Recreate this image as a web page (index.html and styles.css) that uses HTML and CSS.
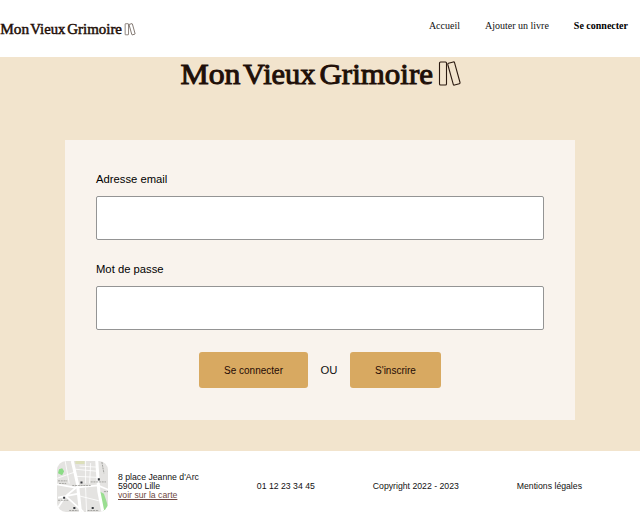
FILE: index.html
```html
<!DOCTYPE html>
<html lang="fr">
<head>
<meta charset="utf-8">
<title>Mon Vieux Grimoire</title>
<link rel="stylesheet" href="styles.css">
</head>
<body>
<svg class="defs" aria-hidden="true">
  <symbol id="logo" viewBox="0 0 282 34">
    <g class="logo-text">
      <text x="0.5" y="26.8" textLength="60" lengthAdjust="spacingAndGlyphs">Mon</text>
      <text x="63" y="26.8" textLength="72.5" lengthAdjust="spacingAndGlyphs">Vieux</text>
      <text x="139.5" y="26.8" textLength="113.5" lengthAdjust="spacingAndGlyphs">Grimoire</text>
    </g>
    <g class="books">
      <rect x="259.5" y="5" width="7" height="23" rx="1"/>
      <rect x="270.4" y="5.2" width="7" height="22.6" rx="1" transform="rotate(-15.5 273.9 16.5)"/>
    </g>
  </symbol>
</svg>
<header class="header">
  <svg class="header-logo"><use href="#logo"/></svg>
  <nav class="nav">
    <a>Accueil</a>
    <a>Ajouter un livre</a>
    <a class="active">Se connecter</a>
  </nav>
</header>
<main class="main">
  <svg class="main-logo"><use href="#logo"/></svg>
  <form class="form">
    <label for="email">Adresse email</label>
    <input id="email" type="text">
    <label for="password">Mot de passe</label>
    <input id="password" type="password">
    <div class="actions">
      <button type="button" class="login">Se connecter</button>
      <span>OU</span>
      <button type="button" class="signup">S'inscrire</button>
    </div>
  </form>
</main>
<footer class="footer">
  <div class="address">
    <svg class="map" viewBox="0 0 50 50">
      <rect width="50" height="50" fill="#e4e3e1"/>
      <path d="M18 0h9v3h-9z" fill="#dcdfba"/>
      <path d="M2 8l3-1 2 3-2 4-4-2z" fill="#8bdc86"/>
      <path d="M42 30l4 2 2 6 2 6v5h-5l-3-11z" fill="#9ade91"/>
      <g fill="none" stroke="#fff">
        <path d="M15 0l5 22 3 28M39 0l2 30 4 20" stroke-width="3"/>
        <path d="M0 23l18 3 22-2 10 4M0 47l8-12 12-10M8 34l18 16M1 36l20-4" stroke-width="1.7"/>
        <path d="M17 8l22 2M18 15l21 1M28 0v22M33 2l-1 20M22 5l17 1M21 34l20 5M28 26l1 24M0 17l17-6M8 0l4 22" stroke-width=".8"/>
      </g>
      <g stroke="#8a8a86" stroke-width=".7" stroke-dasharray="2 .7">
        <path d="M1 19.5h9M2 22h7M15 24h18M33 20.5h15M1 38.5h10M12 48.5h9M30 48.5h11M44 1l2 11M46 30h4"/>
      </g>
      <g fill="#34373b">
        <path d="M23 20h2v2h-2zM40 17h2v2h-2zM6 35h2v2H6zM16 45h2v2h-2zM34 45h2v2h-2z"/>
      </g>
    </svg>
    <div class="address-text">
      <div>8 place Jeanne d'Arc</div>
      <div>59000 Lille</div>
      <a>voir sur la carte</a>
    </div>
  </div>
  <span class="phone">01 12 23 34 45</span>
  <span class="copyright">Copyright 2022 - 2023</span>
  <span class="legal">Mentions légales</span>
</footer>
</body>
</html>
```
FILE: styles.css
```css
* { box-sizing: border-box; }
body {
  margin: 0;
  height: 521px;
  overflow: hidden;
  background: #fff;
  color: #111;
  font-family: "Liberation Sans", sans-serif;
}
.defs { position: absolute; width: 0; height: 0; }
svg, symbol { overflow: visible; }
.logo-text {
  font: 30px "Liberation Serif", serif;
  fill: #1f0f08;
  stroke: #1f0f08;
  stroke-width: 1px;
}
.books { fill: none; stroke: #2b1a10; stroke-width: 1.1px; }
.header {
  display: flex;
  justify-content: space-between;
  height: 57px;
  padding: 19px 12px 0 0;
}
.header-logo { width: 136px; height: 19px; margin-top: 1px; }
.nav {
  display: flex;
  gap: 25px;
  height: 14px;
  font: 10px/14px "Liberation Serif", serif;
}
.active { font-weight: bold; color: #000; }
.main {
  display: flex;
  flex-direction: column;
  align-items: center;
  height: 394px;
  background: #f2e4cd;
}
.main-logo { width: 282px; height: 34px; margin-left: 2px; }
.form {
  width: 510px;
  height: 280px;
  margin-top: 49px;
  padding: 30px 31px 0;
  background: #f9f3ed;
}
.form label { display: block; height: 18px; font-size: 11.25px; line-height: 18px; color: #000; }
.form input {
  display: block;
  width: 448px;
  height: 44px;
  margin: 8px 0 20px;
  padding: 0 8px;
  border: 1px solid #949494;
  border-radius: 2px;
  background: #fff;
}
.actions {
  display: flex;
  justify-content: center;
  align-items: center;
  gap: 12.5px;
  margin-top: 22px;
  font-size: 11.3px;
}
.actions button {
  height: 36px;
  padding: 0;
  border: 0;
  border-radius: 3px;
  background: #d8a961;
  color: #1f0b05;
  font: 10px "Liberation Sans", sans-serif;
}
.actions .login { width: 109px; }
.actions .signup { width: 91px; }
.footer {
  display: flex;
  justify-content: space-between;
  align-items: center;
  height: 70px;
  padding: 0 58px 0 57px;
  font-size: 8.7px;
}
.address { display: flex; align-items: center; gap: 10px; }
.map { width: 51px; height: 51px; border-radius: 9px; overflow: hidden; }
.address-text { line-height: 9px; }
.address-text a { color: #704a45; text-decoration: underline; }
```
